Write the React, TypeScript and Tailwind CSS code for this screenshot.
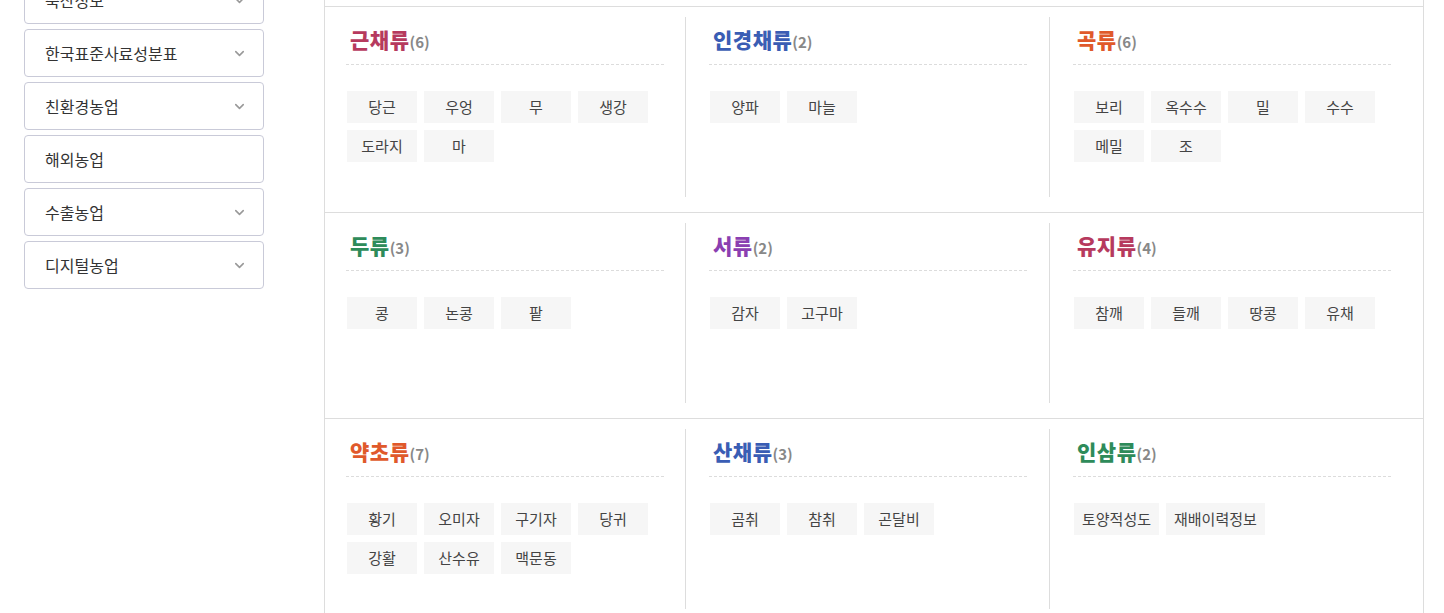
import { ChevronDown } from 'lucide-react';

interface Category {
    name: string;
    color: string;
    items: string[];
}

const MENU: { label: string; arrow: boolean }[] = [
    { label: '축산정보', arrow: true },
    { label: '한국표준사료성분표', arrow: true },
    { label: '친환경농업', arrow: true },
    { label: '해외농업', arrow: false },
    { label: '수출농업', arrow: true },
    { label: '디지털농업', arrow: true }
];

const ROWS: Category[][] = [
    [
        { name: '근채류', color: 'text-[#b63a5e]', items: ['당근', '우엉', '무', '생강', '도라지', '마'] },
        { name: '인경채류', color: 'text-[#3a5db4]', items: ['양파', '마늘'] },
        { name: '곡류', color: 'text-[#e0592b]', items: ['보리', '옥수수', '밀', '수수', '메밀', '조'] }
    ],
    [
        { name: '두류', color: 'text-[#2e8b5a]', items: ['콩', '논콩', '팥'] },
        { name: '서류', color: 'text-[#8b3fb1]', items: ['감자', '고구마'] },
        { name: '유지류', color: 'text-[#b63a5e]', items: ['참깨', '들깨', '땅콩', '유채'] }
    ],
    [
        { name: '약초류', color: 'text-[#e0592b]', items: ['황기', '오미자', '구기자', '당귀', '강활', '산수유', '맥문동'] },
        { name: '산채류', color: 'text-[#3a5db4]', items: ['곰취', '참취', '곤달비'] },
        { name: '인삼류', color: 'text-[#2e8b5a]', items: ['토양적성도', '재배이력정보'] }
    ]
];

function CategoryBox({ cat }: { cat: Category }) {
    return (
        <div className="w-[318px]">
            <div className="pl-[4px] pt-[8px] pb-[8px] border-b border-dashed border-[#dcdcdc] leading-[28px] flex items-baseline">
                <span className={`text-[21px] font-black tracking-[0.5px] ${cat.color}`}>{cat.name}</span>
                <span className="text-[15px] font-semibold text-[#888]">({cat.items.length})</span>
            </div>
            <div className="mt-[26px] ml-px flex flex-wrap gap-[7px]">
                {cat.items.map((item) => (
                    <span
                        key={item}
                        className="h-[32px] min-w-[70px] px-[8px] bg-[#f6f6f6] text-[15px] text-[#444] flex items-center justify-center"
                    >
                        {item}
                    </span>
                ))}
            </div>
        </div>
    );
}

export default function App() {
    return (
        <div
            className="w-[1444px] h-[613px] overflow-hidden bg-white flex"
            style={{ fontFamily: '"Noto Sans CJK KR", "Noto Sans", sans-serif' }}
        >
            <aside className="ml-[24px] w-[240px] mt-[-24px] flex flex-col gap-[5px] shrink-0">
                {MENU.map((m) => (
                    <div
                        key={m.label}
                        className="h-[48px] border border-[#c9cad8] rounded-[4px] pl-[20px] pr-[16px] flex items-center justify-between text-[16px] text-[#333]"
                    >
                        <span>{m.label}</span>
                        {m.arrow && <ChevronDown size={15} strokeWidth={2.5} className="text-[#999]" />}
                    </div>
                ))}
            </aside>

            <main className="ml-[60px] w-[1100px] border-l border-r border-[#dddddd] shrink-0">
                <div className="h-[7px] border-b border-[#dddddd]" />
                {ROWS.map((row, ri) => (
                    <div key={ri} className="pt-[10px] pb-[15px] border-b border-[#dddddd] grid grid-cols-[360px_364px_1fr]">
                        {row.map((cat, ci) => (
                            <div
                                key={cat.name}
                                className={`h-[180px] ${ci === 0 ? 'pl-[21px]' : 'pl-[23px] border-l border-[#dddddd]'}`}
                            >
                                <CategoryBox cat={cat} />
                            </div>
                        ))}
                    </div>
                ))}
            </main>
        </div>
    );
}
